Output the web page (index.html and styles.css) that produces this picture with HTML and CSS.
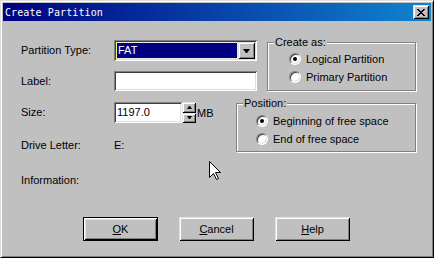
FILE: index.html
```html
<!DOCTYPE html>
<html lang="en">
<head>
  <meta charset="UTF-8" />
  <title>Create Partition</title>
  <link rel="stylesheet" href="styles.css">
</head>
<body>
  <div class="window">
    <div class="titlebar">
      <span class="title">Create Partition</span>
      <span class="close">
        <svg width="8" height="7" viewBox="0 0 8 7" shape-rendering="crispEdges"><path d="M0 0h2v1H0zM6 0h2v1H6zM1 1h2v1H1zM5 1h2v1H5zM2 2h4v1H2zM3 3h2v1H3zM2 4h4v1H2zM1 5h2v1H1zM5 5h2v1H5zM0 6h2v1H0zM6 6h2v1H6z"/></svg>
      </span>
    </div>

    <div class="body">
      <div class="form">
        <div class="lbl h21">Partition Type:</div>
        <div class="combo">
          <div class="sel">FAT</div>
          <div class="drop"></div>
        </div>
        <div class="group create">
          <span class="legend">Create as:</span>
          <div class="opt"><span class="radio on"></span>Logical Partition</div>
          <div class="opt"><span class="radio"></span>Primary Partition</div>
        </div>

        <div class="lbl h20">Label:</div>
        <div class="field label-field"></div>

        <div class="lbl h21">Size:</div>
        <div class="spinrow">
          <div class="field size">1197.0</div>
          <div class="spin">
            <div class="sb up"></div>
            <div class="sb down"></div>
          </div>
          <span class="unit">MB</span>
        </div>
        <div class="group position">
          <span class="legend">Position:</span>
          <div class="opt"><span class="radio on"></span>Beginning of free space</div>
          <div class="opt"><span class="radio"></span>End of free space</div>
        </div>

        <div class="lbl h22">Drive Letter:</div>
        <div class="value h22">E:</div>

        <div class="lbl h20">Information:</div>
      </div>

      <div class="actions">
        <button class="btn default"><u>O</u>K</button>
        <button class="btn"><u>C</u>ancel</button>
        <button class="btn"><u>H</u>elp</button>
      </div>
    </div>

    <svg class="cursor" width="13" height="20" viewBox="0 0 13 20"><path d="M0.5 0.5V16.5L4.5 12.5L7.5 18.5L9.5 17.5L6.5 11.5H11.5Z" fill="#fff" stroke="#000" stroke-width="1"/></svg>
  </div>
</body>
</html>
```

FILE: styles.css
```css
:root {
  --face: #c0c0c0;
  --light: #dfdfdf;
  --shadow: #808080;
  --dark: #404040;
  --raised: inset 1px 1px #dfdfdf, inset -1px -1px #000, inset 2px 2px #fff, inset -2px -2px #808080;
  --sunken: inset 1px 1px #808080, inset -1px -1px #fff, inset 2px 2px #404040, inset -2px -2px #dfdfdf;
}

body {
  margin: 0;
  font-family: "Liberation Sans", Arial, sans-serif;
  font-size: 11px;
  color: #000;
}

.window {
  position: relative;
  width: 434px;
  height: 258px;
  box-sizing: border-box;
  padding: 2px;
  background: var(--face);
  border: 1px solid;
  border-color: var(--light) #000 #000 var(--light);
  box-shadow: inset 1px 1px #fff, inset -1px -1px var(--shadow);
  display: flex;
  flex-direction: column;
}

.titlebar {
  height: 18px;
  padding: 0 2px;
  background: linear-gradient(to right, #000080, #1084d0);
  display: flex;
  align-items: center;
  justify-content: space-between;
}

.title {
  color: #fff;
  font-family: "DejaVu Sans Mono", monospace;
  font-size: 10px;
  letter-spacing: 0.1px;
}

.close {
  width: 16px;
  height: 14px;
  background: var(--face);
  box-shadow: var(--raised);
  display: flex;
  align-items: center;
  justify-content: center;
}

.body {
  padding: 19px 0 0 18px;
}

.form {
  display: grid;
  grid-template-columns: 93px 122px 31px 149px;
  grid-template-rows: 31px 31px 32px 36px 20px;
  align-items: start;
}

.lbl {
  grid-column: 1;
}

.h20 { line-height: 20px; }
.h21 { line-height: 21px; }
.h22 { line-height: 22px; }

.value {
  grid-column: 2;
}

/* combo box */
.combo {
  grid-column: 2 / 4;
  width: 143px;
  height: 21px;
  box-sizing: border-box;
  padding: 2px;
  background: #fff;
  box-shadow: var(--sunken);
  display: flex;
}

.sel {
  flex: 1;
  margin: 1px;
  padding-left: 1px;
  line-height: 15px;
  background: #000080;
  color: #fff;
  outline: 1px dotted #e8e870;
}

.drop {
  width: 17px;
  background: var(--face);
  box-shadow: var(--raised);
  display: flex;
  align-items: center;
  justify-content: center;
}

.drop::before {
  content: "";
  width: 1px;
  border-top: 4px solid #000;
  border-left: 3px solid transparent;
  border-right: 3px solid transparent;
}

.field {
  box-sizing: border-box;
  background: #fff;
  box-shadow: var(--sunken);
}

.label-field {
  grid-column: 2 / 4;
  width: 143px;
  height: 20px;
}

.spinrow {
  grid-column: 2;
  display: flex;
  align-items: center;
}

.size {
  width: 68px;
  height: 21px;
  padding-left: 3px;
  line-height: 20px;
}

.spin {
  width: 14px;
  height: 21px;
  display: flex;
  flex-direction: column;
}

.sb {
  flex: 1;
  background: var(--face);
  box-shadow: var(--raised);
  display: flex;
  align-items: center;
  justify-content: center;
}

.sb::before {
  content: "";
  width: 1px;
  border-left: 2px solid transparent;
  border-right: 2px solid transparent;
}

.up::before { border-bottom: 3px solid #000; }
.down::before { border-top: 3px solid #000; }

.unit {
  margin-left: 1px;
}

/* group boxes */
.group {
  position: relative;
  box-sizing: border-box;
  height: 49px;
  border: 1px solid var(--shadow);
  box-shadow: inset 1px 1px #fff, 1px 1px #fff;
}

.create {
  grid-column: 4;
  grid-row: 1 / 3;
  width: 149px;
  margin-top: 2px;
  padding: 7px 0 0 21px;
}

.position {
  grid-column: 3 / 5;
  grid-row: 3 / 5;
  width: 180px;
  margin-top: 1px;
  padding: 8px 0 0 19px;
}

.legend {
  position: absolute;
  top: -7px;
  left: 6px;
  padding: 0 1px;
  line-height: 13px;
  background: var(--face);
}

.opt {
  height: 18px;
  display: flex;
  align-items: center;
  gap: 5px;
}

.radio {
  position: relative;
  width: 12px;
  height: 12px;
  box-sizing: border-box;
  border-radius: 50%;
  background: #fff;
  border: 1px solid;
  border-color: var(--shadow) #fff #fff var(--shadow);
  box-shadow: inset 1px 1px var(--dark), inset -1px -1px var(--light);
}

.radio.on::after {
  content: "";
  position: absolute;
  left: 3px;
  top: 3px;
  width: 4px;
  height: 4px;
  border-radius: 50%;
  background: #000;
}

/* buttons */
.actions {
  display: flex;
  gap: 21px;
  margin-top: 27px;
  padding-left: 62px;
}

.btn {
  width: 75px;
  height: 24px;
  padding: 0;
  border: none;
  background: var(--face);
  box-shadow: var(--raised);
  font: inherit;
  color: #000;
}

.btn.default {
  box-shadow: inset 0 0 0 1px #000, inset 2px 2px #fff, inset -2px -2px #000, inset 3px 3px var(--light), inset -3px -3px var(--shadow);
}

.cursor {
  position: absolute;
  left: 208px;
  top: 160px;
}
```
